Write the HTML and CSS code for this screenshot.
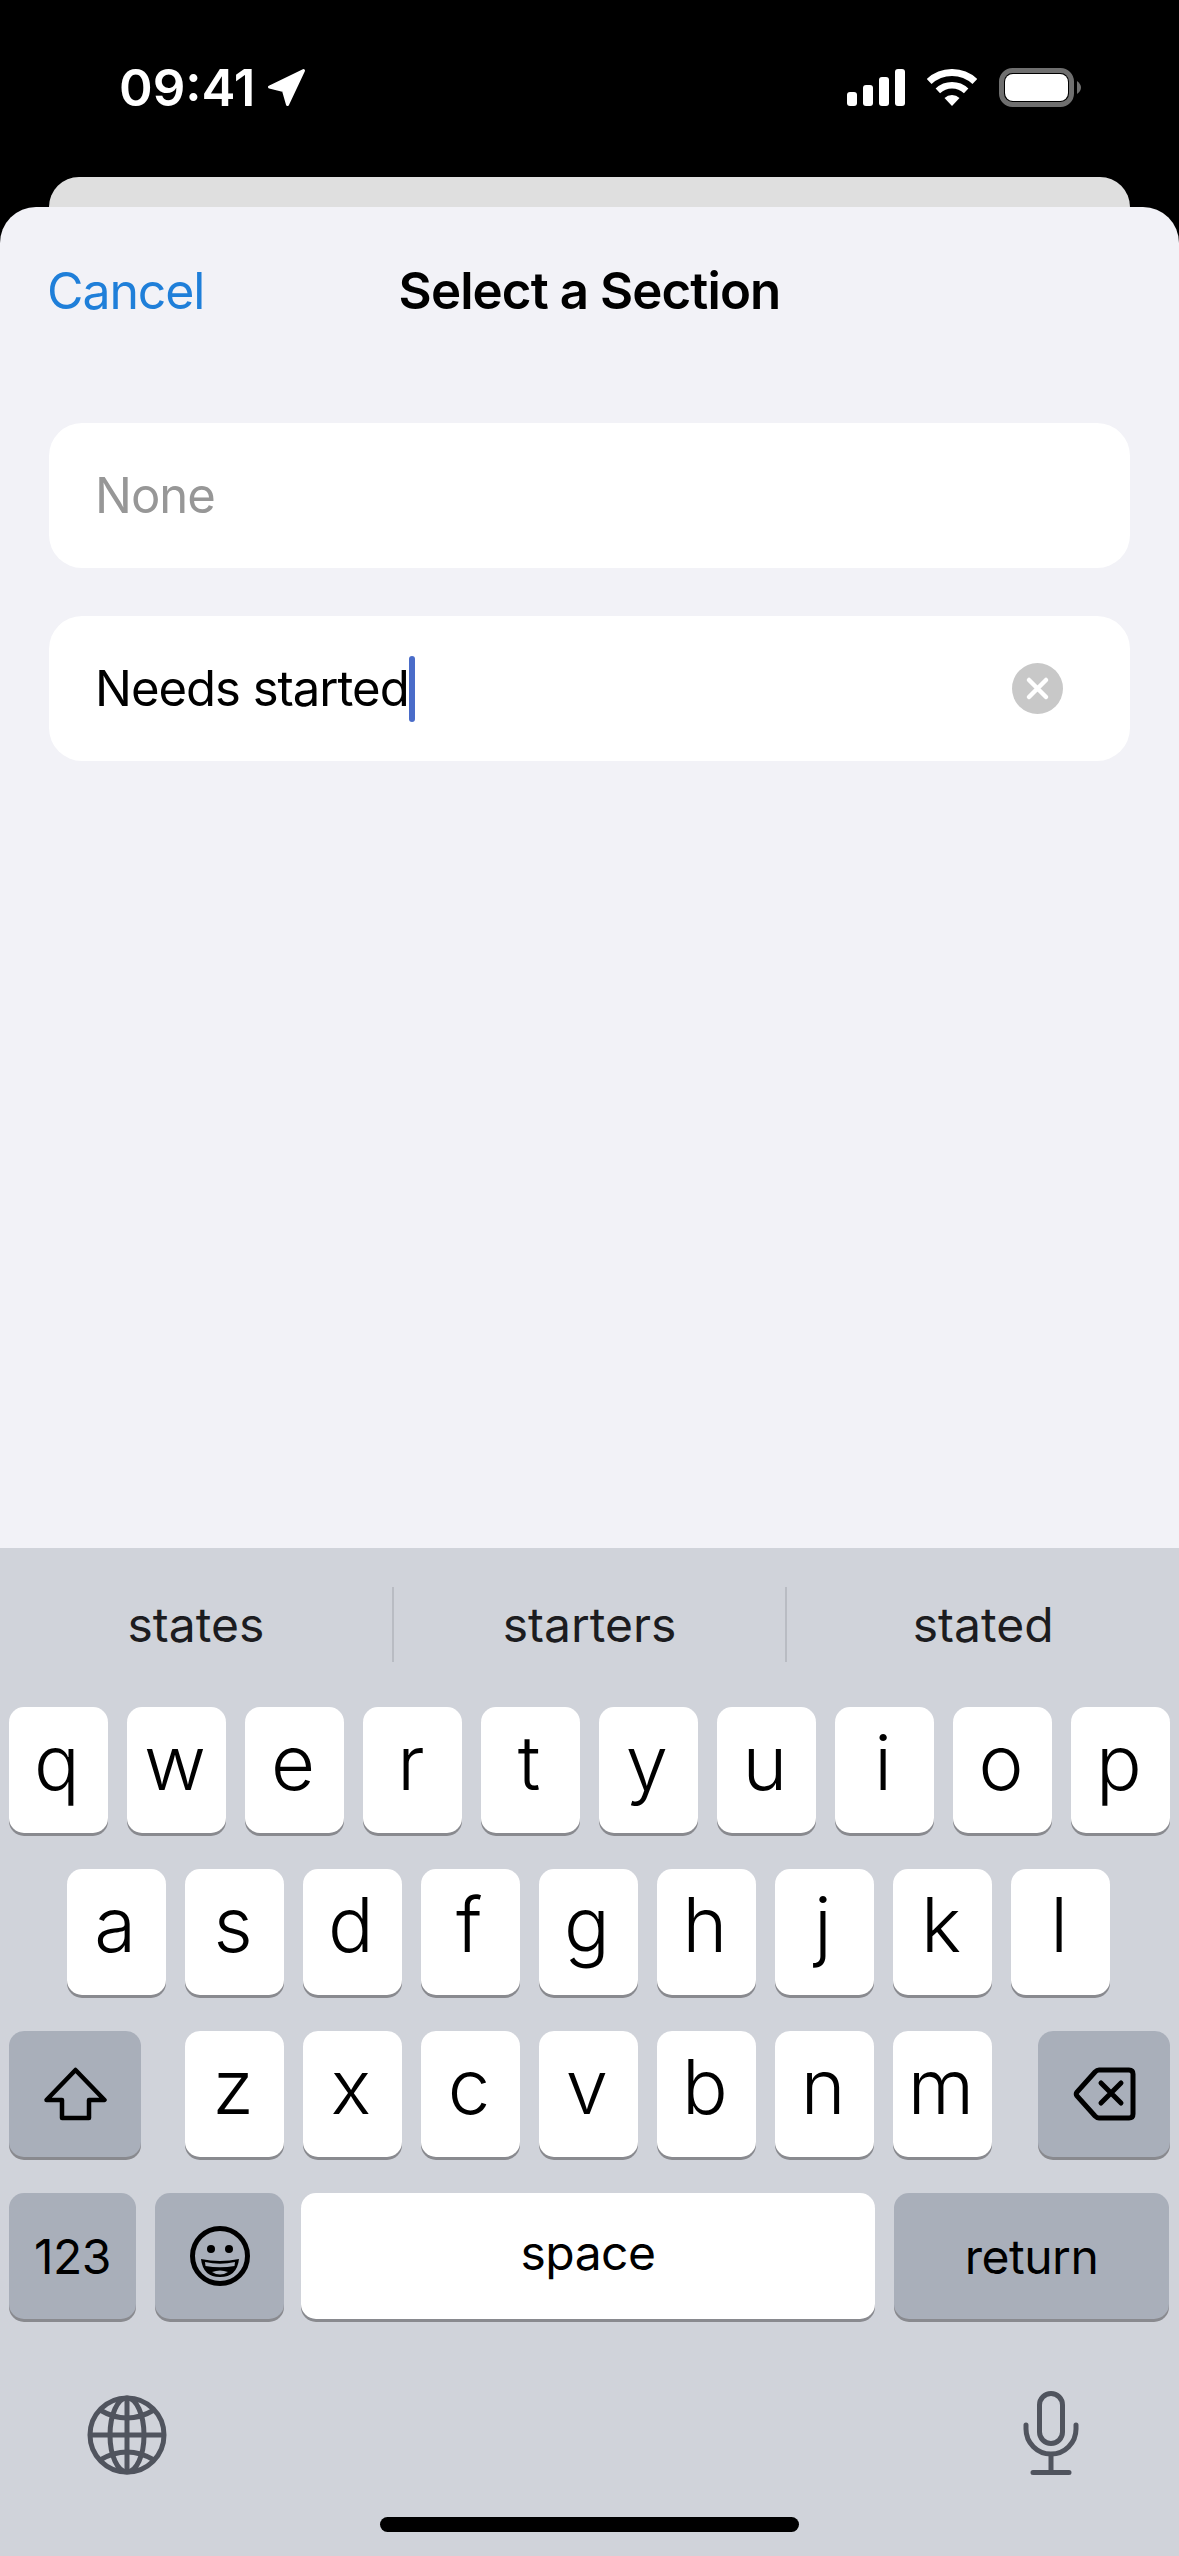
FILE: index.html
```html
<!DOCTYPE html>
<html lang="en">

<head>
    <meta charset="utf-8">
    <meta name="viewport" content="width=device-width, initial-scale=1.0">
    <title>Select a Section</title>
    <link rel="stylesheet" href="styles.css">
</head>

<body>
    <header class="status">
        <div class="status-left">
            <span class="time">09:41</span>
            <svg class="arrow" width="39" height="39" viewBox="0 0 39 39">
                <path d="M36.5 2.5 L2.5 19 L16.5 22.5 L20.5 36.5 Z" fill="#fff" stroke="#fff" stroke-width="3" stroke-linejoin="round" />
            </svg>
        </div>
        <div class="status-right">
            <svg width="58" height="37" viewBox="0 0 58 37" fill="#fff">
                <rect x="0" y="23" width="10" height="14" rx="3" />
                <rect x="16" y="16" width="10" height="21" rx="3" />
                <rect x="32" y="8" width="10" height="29" rx="3" />
                <rect x="48" y="0" width="10" height="37" rx="3" />
            </svg>
            <svg width="50" height="37" viewBox="0 0 50 37" fill="none" stroke="#fff">
                <path d="M2.15 12.5 A33.5 33.5 0 0 1 47.85 12.5" stroke-width="7" />
                <path d="M10.85 21.83 A20.75 20.75 0 0 1 39.15 21.83" stroke-width="6.5" />
                <path d="M25 37 L17.5 28.96 A11 11 0 0 1 32.5 28.96 Z" fill="#fff" stroke="none" />
            </svg>
            <svg width="82" height="39" viewBox="0 0 82 39">
                <rect x="2.5" y="2.5" width="70" height="34" rx="11" fill="none" stroke="#6f6f6f" stroke-width="5" />
                <rect x="6" y="6" width="63" height="27" rx="8" fill="#fff" />
                <path d="M78 13 Q82 16 82 19.5 Q82 23 78 26 Z" fill="#6f6f6f" />
            </svg>
        </div>
    </header>

    <div class="back-card"></div>

    <main class="sheet">
        <nav class="nav">
            <span class="cancel">Cancel</span>
            <h1 class="title">Select a Section</h1>
        </nav>

        <div class="field">
            <span class="placeholder">None</span>
        </div>

        <div class="field">
            <span class="value">Needs started</span>
            <span class="caret"></span>
            <svg class="clear" width="51" height="51" viewBox="0 0 51 51">
                <circle cx="25.5" cy="25.5" r="25.5" fill="#c8c8c8" />
                <path d="M17 17 L34 34 M34 17 L17 34" stroke="#fff" stroke-width="4.5" stroke-linecap="round" />
            </svg>
        </div>
    </main>

    <section class="keyboard">
        <div class="suggestions">
            <span class="suggestion">states</span>
            <span class="suggestion">starters</span>
            <span class="suggestion">stated</span>
        </div>

        <div class="row">
            <span class="key">q</span>
            <span class="key">w</span>
            <span class="key">e</span>
            <span class="key">r</span>
            <span class="key">t</span>
            <span class="key">y</span>
            <span class="key">u</span>
            <span class="key">i</span>
            <span class="key">o</span>
            <span class="key">p</span>
        </div>

        <div class="row row-middle">
            <span class="key">a</span>
            <span class="key">s</span>
            <span class="key">d</span>
            <span class="key">f</span>
            <span class="key">g</span>
            <span class="key">h</span>
            <span class="key">j</span>
            <span class="key">k</span>
            <span class="key">l</span>
        </div>

        <div class="row row-shift">
            <span class="key dark wide">
                <svg width="63" height="54" viewBox="0 0 63 54">
                    <path d="M31.5 3 L60.5 33 H45 V51 H18 V33 H2.5 Z" fill="none" stroke="#000" stroke-width="4.5" stroke-linejoin="round" />
                </svg>
            </span>
            <div class="letters">
                <span class="key">z</span>
                <span class="key">x</span>
                <span class="key">c</span>
                <span class="key">v</span>
                <span class="key">b</span>
                <span class="key">n</span>
                <span class="key">m</span>
            </div>
            <span class="key dark wide">
                <svg width="63" height="54" viewBox="0 0 63 54">
                    <path d="M26 3 H56 Q60 3 60 7 V47 Q60 51 56 51 H26 Q24 51 22 49 L4 29 Q2.5 27 4 25 L22 5 Q24 3 26 3 Z" fill="none" stroke="#000" stroke-width="5" />
                    <path d="M28 16 L48 36 M48 16 L28 36" stroke="#000" stroke-width="5" stroke-linecap="round" />
                </svg>
            </span>
        </div>

        <div class="row row-bottom">
            <span class="key dark small k123">123</span>
            <span class="key dark k-emoji">
                <svg width="60" height="60" viewBox="0 0 60 60">
                    <circle cx="30" cy="30" r="27.5" fill="none" stroke="#000" stroke-width="5" />
                    <circle cx="21" cy="23" r="4" />
                    <circle cx="39" cy="23" r="4" />
                    <path d="M11 33 Q30 37 49 33 Q47 51 30 51 Q13 51 11 33 Z" />
                    <path d="M15 36 Q30 39.5 45 36 L44.5 40 Q30 42.5 15.5 40 Z" fill="#a9afba" />
                    <path d="M22 46 Q30 43 38 46 Q34 48.5 30 48.5 Q26 48.5 22 46 Z" fill="#a9afba" />
                </svg>
            </span>
            <span class="key small k-space">space</span>
            <span class="key dark small k-return">return</span>
        </div>

        <div class="tools">
            <svg width="80" height="80" viewBox="0 0 80 80" fill="none" stroke="#50545e" stroke-width="5">
                <circle cx="40" cy="40" r="37" />
                <ellipse cx="40" cy="40" rx="17" ry="37" />
                <path d="M40 3 V77 M3 40 H77" />
                <path d="M13 15 Q40 31 67 15 M13 65 Q40 49 67 65" />
            </svg>
            <svg width="56" height="84" viewBox="0 0 56 84" fill="none" stroke="#50545e" stroke-width="5" stroke-linecap="round">
                <rect x="16.5" y="2.5" width="23" height="50" rx="11.5" />
                <path d="M3 34 V38 A25 25 0 0 0 53 38 V34" />
                <path d="M28 64 V81 M10 81.5 H46" />
            </svg>
        </div>

        <div class="home-bar"></div>
    </section>
</body>

</html>
```

FILE: styles.css
```css
* {
    box-sizing: border-box;
}

body {
    margin: 0;
    width: 1179px;
    height: 2556px;
    overflow: hidden;
    display: flex;
    flex-direction: column;
    background: #000;
    font-family: Inter, "Liberation Sans", sans-serif;
    color: #000;
}

/* status bar */
.status {
    height: 177px;
    flex-shrink: 0;
    padding: 68px 98px 0 119px;
    display: flex;
    justify-content: space-between;
    align-items: flex-start;
}

.status-left {
    display: flex;
    align-items: center;
    gap: 12px;
    height: 39px;
}

.time {
    color: #fff;
    font-size: 51px;
    font-weight: 600;
    line-height: 39px;
}

.status-right {
    display: flex;
    align-items: center;
    gap: 22px;
    height: 39px;
}

.back-card {
    height: 60px;
    margin: 0 49px -30px;
    flex-shrink: 0;
    background: #dfdfdf;
    border-radius: 30px 30px 0 0;
}

/* sheet */
.sheet {
    flex: 1;
    padding: 0 49px;
    background: #f2f2f7;
    border-radius: 36px 36px 0 0;
}

.nav {
    height: 216px;
    padding-top: 54px;
    display: grid;
    grid-template-columns: 1fr auto 1fr;
    align-items: start;
    font-size: 50px;
    line-height: 60px;
}

.cancel {
    margin-left: -2px;
    color: #1f7fd9;
    letter-spacing: -1.1px;
}

.title {
    grid-column: 2;
    margin: 0;
    font-size: 51px;
    line-height: 60px;
    font-weight: 600;
    letter-spacing: -0.9px;
}

.field {
    height: 145px;
    margin-bottom: 48px;
    padding: 0 67px 0 46px;
    display: flex;
    align-items: center;
    background: #fff;
    border-radius: 33px;
    font-size: 49px;
    letter-spacing: -1px;
}

.placeholder {
    color: #979797;
}

.caret {
    width: 6px;
    height: 66px;
    background: #4a6cc9;
    border-radius: 3px;
}

.clear {
    margin-left: auto;
}

/* keyboard */
.keyboard {
    flex-shrink: 0;
    padding-top: 39px;
    background: #d0d3da;
}

.suggestions {
    height: 75px;
    margin-bottom: 45px;
    display: flex;
}

.suggestion {
    flex: 1;
    text-align: center;
    font-size: 48px;
    line-height: 75px;
    color: #1c1c20;
}

.suggestion + .suggestion {
    border-left: 2px solid #b9bcc3;
}

.row {
    height: 129px;
    margin-bottom: 33px;
    padding: 0 9px;
    display: flex;
    gap: 19px;
}

.row-middle {
    padding-left: 67px;
}

.row-shift {
    justify-content: space-between;
    gap: 0;
}

.letters {
    display: flex;
    gap: 19px;
    margin-right: 2px;
}

.key {
    width: 99px;
    height: 126px;
    padding: 0 3px 16px 0;
    display: flex;
    align-items: center;
    justify-content: center;
    background: #fff;
    border-radius: 15px;
    box-shadow: 0 3px 0 #898a8f;
    font-size: 76px;
    font-weight: 300;
}

.dark {
    background: #a9afba;
}

.wide {
    width: 132px;
    padding: 0;
}

.small {
    font-size: 48px;
    font-weight: 400;
    padding: 0;
    letter-spacing: -0.5px;
}

.row-bottom {
    margin-bottom: 0;
    gap: 0;
}

.k123 {
    width: 127px;
}

.k-emoji {
    width: 129px;
    margin-left: 19px;
    padding: 0;
}

.k-space {
    width: 574px;
    margin-left: 17px;
    padding-bottom: 8px;
}

.k-return {
    width: 275px;
    margin-left: 19px;
}

.tools {
    margin-top: 69px;
    padding: 0 100px 0 87px;
    display: flex;
    justify-content: space-between;
    align-items: flex-end;
}

.home-bar {
    width: 419px;
    height: 15px;
    margin: 42px auto 24px;
    background: #000;
    border-radius: 8px;
}
```
